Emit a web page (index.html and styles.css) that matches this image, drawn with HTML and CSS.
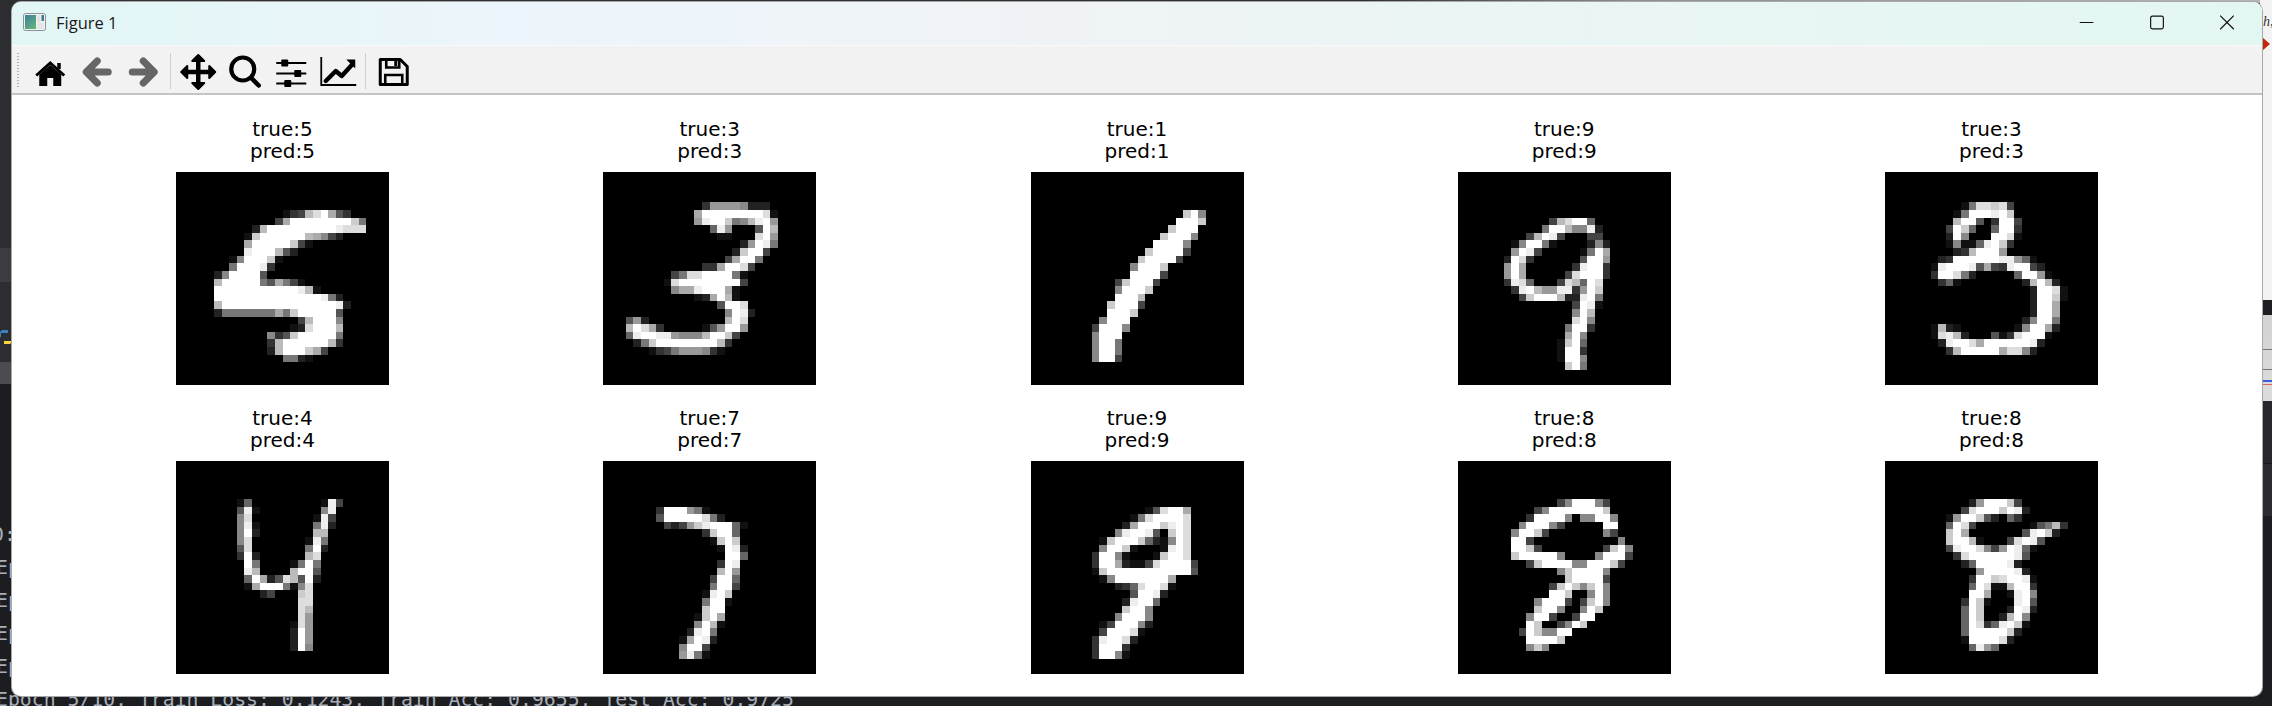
FILE: index.html
```html
<!DOCTYPE html>
<html lang="en">
<head>
<meta charset="utf-8">
<title>Figure 1</title>
<link rel="stylesheet" href="styles.css">
</head>
<body>
<div class="desktop">
  <div class="top-strip"></div>
  <div class="left-strip">
    <div class="panel-a"></div>
    <div class="panel-b"></div>
    <div class="panel-c">
      <svg class="py" viewBox="0 0 12 16"><path d="M2 1h6v3H1v4H0V3z" fill="#3f7fc0"/><path d="M10 15H4v-3h7V8h1v5z" fill="#ffd43b"/></svg>
    </div>
    <div class="panel-e"></div>
    <div class="panel-d"></div>
  </div>
  <div class="terminal">
    <div class="term-line term-first">0:</div>
    <div class="term-line">Epoch 1/10, Train Loss: 0.3514, Train Acc: 0.8992, Test Acc: 0.9401</div>
    <div class="term-line">Epoch 2/10, Train Loss: 0.2208, Train Acc: 0.9367, Test Acc: 0.9524</div>
    <div class="term-line">Epoch 3/10, Train Loss: 0.1731, Train Acc: 0.9504, Test Acc: 0.9610</div>
    <div class="term-line">Epoch 4/10, Train Loss: 0.1432, Train Acc: 0.9589, Test Acc: 0.9672</div>
    <div class="term-line">Epoch 5/10, Train Loss: 0.1243, Train Acc: 0.9655, Test Acc: 0.9725</div>
  </div>
  <div class="right-strip">
    <div class="r-light"><span class="r-note">h,</span><span class="r-arrow"></span></div>
    <div class="r-gap"></div>
    <div class="r-grey"><i class="r-line r-first"></i><i class="r-line"></i><i class="r-line r-blue"></i><i class="r-line r-red"></i></div>
    <div class="r-mid"></div>
    <div class="r-dark"></div>
  </div>

  <div class="window">
    <header class="titlebar">
      <svg class="app-icon" viewBox="0 0 23 18">
        <defs><linearGradient id="appg" x1="0" y1="0" x2="0.6" y2="1"><stop offset="0" stop-color="#3f7f9f"/><stop offset="1" stop-color="#5fb07a"/></linearGradient></defs>
        <rect x="0.5" y="0.5" width="22" height="17" rx="2" fill="#f0f2f2" stroke="#8d9396"/>
        <rect x="2" y="2" width="11" height="14" fill="url(#appg)"/>
        <rect x="14" y="2" width="3.5" height="7" fill="#dfe3e3"/>
        <rect x="18.5" y="2" width="2.5" height="6" fill="#3b7a8c"/>
        <rect x="14" y="10" width="7" height="6" fill="#e4e6e6"/>
      </svg>
      <span class="win-title">Figure 1</span>
      <div class="controls">
        <svg class="ctl" viewBox="0 0 46 44"><path d="M15 22.5h15" stroke="#111" stroke-width="1.2"/></svg>
        <svg class="ctl" viewBox="0 0 46 44"><rect x="16" y="15.5" width="14" height="14" rx="2" fill="none" stroke="#111" stroke-width="1.3"/></svg>
        <svg class="ctl" viewBox="0 0 46 44"><path d="M15.5 15l15 15M30.5 15l-15 15" stroke="#111" stroke-width="1.3"/></svg>
      </div>
    </header>

    <nav class="toolbar">
      <span class="grip"></span>
      <svg class="tool" viewBox="0 0 46 46"><path d="M12 26.5L23 17l11 9.5V38h-8V30h-6v8h-8z" fill="#000"/><path d="M9 27.5L23 15l14 12.5" fill="none" stroke="#000" stroke-width="3"/><path d="M30 15h3.5v6H30z" fill="#000"/></svg>
      <svg class="tool" viewBox="0 0 46 46"><path d="M34 24H14M23 13L12 24l11 11" fill="none" stroke="#666" stroke-width="7" stroke-linecap="round" stroke-linejoin="round"/></svg>
      <svg class="tool" viewBox="0 0 46 46"><path d="M12 24h20M23 13l11 11-11 11" fill="none" stroke="#666" stroke-width="7" stroke-linecap="round" stroke-linejoin="round"/></svg>
      <span class="sep"></span>
      <svg class="tool" viewBox="0 0 46 46"><path d="M10 24h26M23 11v26" stroke="#000" stroke-width="4.5"/><path d="M17 13l6-6 6 6zM17 35l6 6 6-6zM12 18l-6 6 6 6zM34 18l6 6-6 6z" fill="#000" stroke="#000" stroke-width="2" stroke-linejoin="round"/></svg>
      <svg class="tool" viewBox="0 0 46 46"><circle cx="20.5" cy="21" r="11.5" fill="none" stroke="#000" stroke-width="4.2"/><path d="M29 30l7.5 7.5" stroke="#000" stroke-width="4.5" stroke-linecap="round"/></svg>
      <svg class="tool" viewBox="0 0 46 46"><path d="M8 15h30M8 25.5h30M8 35.5h30" stroke="#000" stroke-width="2.2"/><rect x="13" y="11.5" width="7" height="7" rx="1" fill="#000"/><rect x="26" y="22" width="7" height="7" rx="1" fill="#000"/><rect x="16" y="32" width="7" height="7" rx="1" fill="#000"/></svg>
      <svg class="tool" viewBox="0 0 46 46"><path d="M6 9v28h35" fill="none" stroke="#000" stroke-width="1.8"/><path d="M10.5 33l10-10 6 5 10-11" fill="none" stroke="#000" stroke-width="4.4" stroke-linejoin="round" stroke-linecap="round"/><path d="M31 11.5h9v9z" fill="#000"/></svg>
      <span class="sep"></span>
      <svg class="tool" viewBox="0 0 46 46"><path d="M10 11.5h20l7 7V36.5H10z" fill="none" stroke="#000" stroke-width="3" stroke-linejoin="round"/><path d="M16 11v8.5h13V12" fill="none" stroke="#000" stroke-width="2.6"/><path d="M24 13h3v5h-3z" fill="#000"/><path d="M15 36V27h17v9" fill="none" stroke="#000" stroke-width="2.6"/></svg>
    </nav>

    <main class="figure">
      <figure class="axes"><figcaption>true:5<br>pred:5</figcaption><canvas class="digit" width="28" height="28" data-digit="five"></canvas></figure>
      <figure class="axes"><figcaption>true:3<br>pred:3</figcaption><canvas class="digit" width="28" height="28" data-digit="threeA"></canvas></figure>
      <figure class="axes"><figcaption>true:1<br>pred:1</figcaption><canvas class="digit" width="28" height="28" data-digit="one"></canvas></figure>
      <figure class="axes"><figcaption>true:9<br>pred:9</figcaption><canvas class="digit" width="28" height="28" data-digit="nineA"></canvas></figure>
      <figure class="axes"><figcaption>true:3<br>pred:3</figcaption><canvas class="digit" width="28" height="28" data-digit="threeB"></canvas></figure>
      <figure class="axes"><figcaption>true:4<br>pred:4</figcaption><canvas class="digit" width="28" height="28" data-digit="four"></canvas></figure>
      <figure class="axes"><figcaption>true:7<br>pred:7</figcaption><canvas class="digit" width="28" height="28" data-digit="seven"></canvas></figure>
      <figure class="axes"><figcaption>true:9<br>pred:9</figcaption><canvas class="digit" width="28" height="28" data-digit="nineB"></canvas></figure>
      <figure class="axes"><figcaption>true:8<br>pred:8</figcaption><canvas class="digit" width="28" height="28" data-digit="eightA"></canvas></figure>
      <figure class="axes"><figcaption>true:8<br>pred:8</figcaption><canvas class="digit" width="28" height="28" data-digit="eightB"></canvas></figure>
    </main>
  </div>
</div>
<script src="digits.js"></script>
</body>
</html>
```
FILE: styles.css
```css
* { box-sizing: border-box; }
html, body { margin: 0; padding: 0; width: 2272px; height: 706px; overflow: hidden; background: #1c1d20; }
.desktop { position: relative; width: 2272px; height: 706px; overflow: hidden; background: #1c1d20; }

.top-strip { position: absolute; left: 0; top: 0; width: 2272px; height: 3px; background: linear-gradient(90deg, #2e2f33 0 60%, #8d8e90 72%, #b5b5b5); }

.left-strip { position: absolute; left: 0; top: 0; width: 14px; height: 706px; display: flex; flex-direction: column; }
.panel-a { height: 248px; background: #2b2d30; }
.panel-b { height: 34px; background: #3a3c40; }
.panel-c { height: 80px; background: #2b2d30; padding-top: 47px; }
.panel-e { height: 22px; background: #4a4c50; }
.panel-d { flex: 1; background: #1c1d20; }
.py { display: block; width: 12px; height: 16px; }

.terminal { position: absolute; left: -4px; top: 518px; font: 19.8px/33px "DejaVu Sans Mono", monospace; color: #a7aeb8; }
.term-line { white-space: pre; height: 33px; }
.term-first { margin-left: -4px; }

.right-strip { position: absolute; left: 2260px; top: 0; width: 12px; height: 706px; display: flex; flex-direction: column; }
.r-light { position: relative; height: 300px; background: #f3f3f3; }
.r-note { position: absolute; left: 3px; top: 14px; font: italic 14px "Liberation Serif", serif; color: #333; }
.r-arrow { position: absolute; left: 2px; top: 37px; width: 0; height: 0; border-left: 8px solid #c0290f; border-top: 7px solid transparent; border-bottom: 7px solid transparent; }
.r-gap { height: 15px; background: #1e1f22; }
.r-grey { height: 86px; background: linear-gradient(#d2d2d2, #dcdcdc); display: flex; flex-direction: column; padding-top: 34px; }
.r-line { display: block; height: 1px; background: #777; margin-bottom: 10px; }
.r-first { margin-bottom: 19px; }
.r-blue { background: #3a5de0; margin-bottom: 2px; height: 2px; }
.r-red { background: #e0605a; }
.r-mid { height: 115px; background: linear-gradient(#26282b 0 62px, #17181a 62px 63px, #2a2c2f 63px); }
.r-dark { flex: 1; background: #1c1d20; }

.window { position: absolute; left: 12px; top: 2px; width: 2250px; height: 694px; border-radius: 9px; overflow: hidden; background: #fff; display: flex; flex-direction: column; box-shadow: 0 0 0 1px #a8a8a8; }

.titlebar { height: 43px; flex: none; display: flex; align-items: center; padding: 0 0 3px 11px; background: linear-gradient(90deg, #e1f6f5, #ecf5fb 22%, #f0f3f6 45%, #e9f5f4 70%, #e3f7f2); }
.app-icon { width: 23px; height: 18px; flex: none; }
.win-title { margin-left: 10px; font: 16.5px "Open Sans", sans-serif; color: #1a1a1a; }
.controls { margin-left: auto; margin-right: 12px; display: flex; gap: 24px; }
.ctl { display: block; width: 46px; height: 40px; }

.toolbar { height: 50px; flex: none; display: flex; align-items: center; padding: 3px 0 0 5px; background: #f2f2f2; border-top: 1px solid #fafafa; border-bottom: 2px solid #c4c4c4; }
.grip { width: 2px; height: 36px; margin-right: 8px; background: repeating-linear-gradient(#b0b0b0 0 1px, transparent 1px 3px); }
.tool { width: 46.5px; height: 46px; flex: none; display: block; }
.sep { width: 1px; height: 36px; flex: none; margin: 0 4px 0 3.5px; background: #cfcfcf; }

.figure { flex: 1; display: grid; grid-template-columns: repeat(5, 213px); column-gap: 214.25px; row-gap: 23px; align-content: start; padding: 24px 0 0 164px; }
.axes { margin: 0; width: 213px; }
.axes figcaption { height: 53px; text-align: center; font: 20px/21.7px "DejaVu Sans", sans-serif; color: #000; white-space: nowrap; }
.digit { display: block; width: 213px; height: 213px; image-rendering: pixelated; background: #000; }
```
FILE: digits.js
```js
var DIGITS = {
  five: ["5 14 134bdfa53","6 13 4affffffffc7","7 10 2bfffffffffeddd","8 9 1cffffffba842","9 9 afffffc41","10 9 efffb52","11 7 18fffc1","12 7 7fffe3","13 5 28ffff5","14 5 bfffff75a741","15 5 fffffffffffeb1","16 5 ffffffffffffffe72","17 5 bfffffffffffffffe2","18 5 27777777a7cfffff5","19 16 4bfff8","20 15 12dfffb","21 12 835cfffff7","22 12 3bffffffb3","23 12 2bfffca4","24 14 7721"],
  threeA: ["4 13 399998222","5 12 affffffffd1","6 12 9effc78bef9","7 14 6e9","7 20 5fb","8 15 11","8 20 df9","9 18 29fe7","10 17 2cff4","11 16 4aff7","12 13 33affd4","13 9 47ddffff71","14 8 1dffffffff4","15 9 8aaefffa1","16 12 12afb1","17 15 5ffd","18 16 8fe2","19 3 592","19 16 bfd","20 3 bfda3","20 13 159ff9","21 3 6effee9888bffc4","22 4 27cffffffffb3","23 6 1347999831"],
  one: ["5 20 cf8","6 19 fffc","7 18 cfff","8 17 cfff8","9 16 ffff8","10 15 cffff4","11 14 cffff4","12 13 8fffc","13 13 ffff4","14 11 4cfff4","15 11 8fffc","16 11 fffb","17 10 cfff4","18 10 fffc","19 9 8fff","20 8 4fff8","21 8 8fff","22 8 8ff7","23 8 8ff7","24 8 8ff4"],
  nineA: ["6 12 4bdff6","7 11 7ffb88e2","8 9 4bfe4","8 17 44","9 7 18ff71","9 17 282","10 7 9fe4","10 16 17fa","11 6 2fd3","11 16 5ff9","12 6 9fa","12 15 3eff3","13 6 9fa","13 14 4dfff3","14 6 3ed6","14 13 4db6fd","15 7 3efb99ee39fc","16 8 4cfffb22ef7","17 15 4fe1","18 15 8fb","19 15 df8","20 14 7ff3","21 14 af8","22 13 1cf6","23 13 1ff3","24 13 1ff8","25 14 cf7"],
  threeB: ["4 10 17ddcd4","5 9 17fffefc","6 9 bff503ff4","7 8 4fc6","7 14 6ff3","8 8 2f8","8 14 ffd1","9 8 18116efc3","10 9 23bfff9","11 7 23ffffffee961","12 6 1efffe5a43eff42","13 6 3ffd72","13 17 6ff91","14 7 361","14 18 2bfb2","15 19 2ffd1","16 19 2ffc1","17 19 2ffa","18 19 2ffa","19 18 28ff7","20 6 1b21","20 17 18ffa2","21 6 1deb2","21 14 513dfff1","22 7 2effdaffffffe2","23 8 3bfffffadd82"],
  four: ["5 8 16","5 19 1e4","6 8 5e1","6 19 8e","7 8 8d","7 18 1e4","8 8 8e1","8 18 7e2","9 8 8f2","9 18 bb","10 8 8d","10 17 1e7","11 8 5d","11 17 7f2","12 8 3f2","12 17 bd","13 9 f7","13 15 17f7","14 9 eb","14 15 bff5","15 9 6fa25db5f2","16 9 1afff718d","17 11 24","17 16 cd","18 16 dd","19 16 db","20 16 d9","21 15 1d9","22 15 2f9","23 15 2f9","24 15 2f8"],
  seven: ["6 7 3fff971","7 7 5fffffd72","8 8 4249cefff61","9 13 3cff6","10 14 1cfc","11 15 1fe2","12 16 ff6","13 15 3fe","14 15 bf9","15 14 4ff6","16 14 7ff4","17 13 1efc","18 13 7ff1","19 13 cff","20 12 1cfa","21 12 8fb1","22 11 2ef7","23 10 1afe2","24 10 8ff4","25 10 9e71"],
  nineB: ["6 15 15dffa","7 13 17dffffd","8 12 2afffcefd","9 11 8effe50cfd","10 9 1cfffc6218fd","11 9 8ffc10001efd","12 8 3ff81","12 16 1cffd","13 8 3ffa2114dffff4","14 8 1cfffffffffff5","15 9 18fffffffa","16 11 236dffd1","17 13 5ffe2","18 12 2eff6","19 12 cff8","20 11 8fff8","21 9 14fff82","22 9 4fffd1","23 8 3effd2","24 8 3fff3","25 8 3ff81"],
  eightA: ["5 13 48fff84","6 10 48fffffffc","7 9 3ffff8088ff8","8 8 8fff84","8 19 ff","9 7 8ffc4","9 19 84","10 7 ff4","10 21 8","11 7 ffc4","11 19 4cf8","12 7 cfffff8","12 18 8fff4","13 9 4cffff88fffc4","14 13 8cffff8","15 14 cffff4","16 12 4cfc8cf8","17 12 ffc008f8","18 10 8fff4","18 16 4cf8","19 10 cff8","19 16 8fc","20 9 8ff4","20 15 4ff","21 9 fc","21 13 48fc","22 8 4fc88ff","23 9 ffffc","24 9 8c8"],
  eightB: ["5 11 29fffc4","6 10 4dfffcfe2","7 8 19ffc52063","8 8 6fd4","8 19 157b3","9 8 cfa","9 18 5efc2","10 8 cffb1","10 16 4dfe5","11 8 4effd849fe61","12 9 3dffffffe5","13 10 26ffffe2","14 12 9ffffe2","15 11 3ffcdffe1","16 11 6fd11bff3","17 11 ffa","17 16 1ef8","18 10 3fc1","18 17 ef5","19 10 6fc","19 16 2fe2","20 10 6fc","20 15 2bf8","21 10 6fd36efc1","22 10 6fffffc2","23 10 1ffffd2","24 11 6e96"]
};

function paintDigit(canvas) {
  var ctx = canvas.getContext("2d");
  ctx.fillStyle = "#000";
  ctx.fillRect(0, 0, 28, 28);
  DIGITS[canvas.dataset.digit].forEach(function (entry) {
    var parts = entry.split(" ");
    var row = parseInt(parts[0], 10);
    var col = parseInt(parts[1], 10);
    var values = parts[2];
    for (var i = 0; i < values.length; i++) {
      var gray = parseInt(values[i], 16) * 17;
      ctx.fillStyle = "rgb(" + gray + "," + gray + "," + gray + ")";
      ctx.fillRect(col + i, row, 1, 1);
    }
  });
}

document.querySelectorAll(".digit").forEach(paintDigit);
```
